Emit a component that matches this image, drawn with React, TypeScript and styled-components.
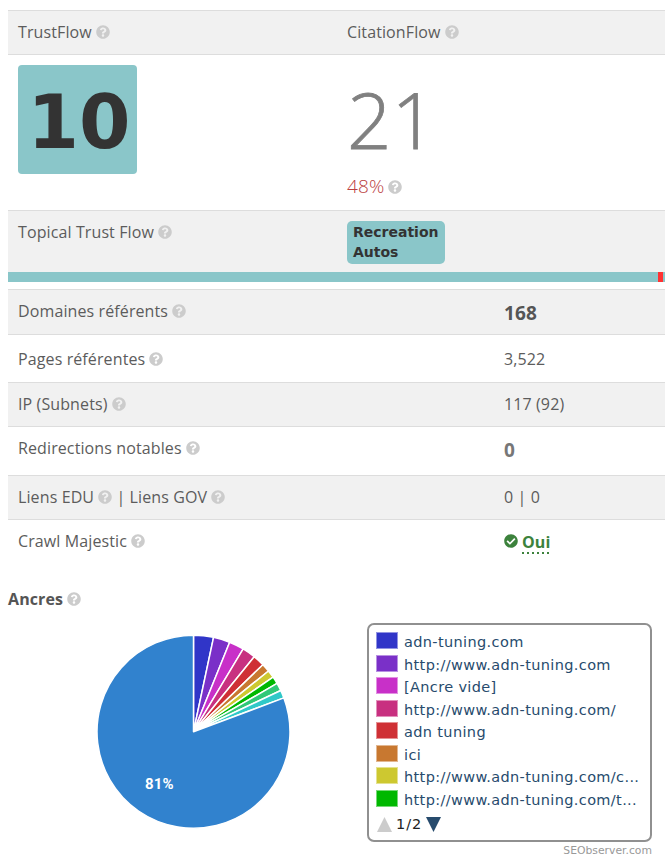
import React from 'react';
import styled, { createGlobalStyle } from 'styled-components';
import { FaQuestionCircle, FaCheckCircle } from 'react-icons/fa';

const GlobalStyle = createGlobalStyle`
  html, body { margin: 0; padding: 0; background: #fff; }
  body { font-family: "Open Sans", sans-serif; font-size: 16px; letter-spacing: 0.11px; color: #5c5c5c; }
`;

const Page = styled.div`
  width: 668px;
  height: 862px;
  overflow: hidden;
  padding: 10px 3px 0 8px;
  box-sizing: border-box;
`;

const HeadRow = styled.div`
  display: grid;
  grid-template-columns: 329px 1fr;
  height: 43px;
  background: #f1f1f1;
  border-top: 1px solid #ddd;
  border-bottom: 1px solid #ddd;
  line-height: 43px;
`;

const Cell = styled.div`
  padding-left: 10px;
`;

const Help = styled(FaQuestionCircle)`
  color: #ccc;
  font-size: 14px;
  margin-left: 4px;
  vertical-align: -1px;
`;

const ScoreRow = styled.div`
  display: grid;
  grid-template-columns: 329px 1fr;
  height: 155px;
`;

const ScoreCell = styled.div`
  padding: 10px 0 0 10px;
`;

const TrustBadge = styled.div`
  width: 119px;
  height: 109px;
  padding-left: 3px;
  box-sizing: border-box;
  border-radius: 4px;
  background: #8ac6c9;
  color: #333;
  font: bold 74px/115px "DejaVu Sans", sans-serif;
  letter-spacing: 0;
  text-align: center;
`;

const Citation = styled.div`
  font-size: 78px;
  font-weight: 300;
  -webkit-text-stroke: 0.8px #808080;
  letter-spacing: 0;
  line-height: 109px;
  color: #808080;
`;

const Ratio = styled.div`
  font-size: 19px;
  font-weight: 300;
  line-height: 24px;
  color: #bb3f3f;
`;

const TopicalRow = styled.div`
  display: grid;
  grid-template-columns: 329px 1fr;
  height: 62px;
  box-sizing: border-box;
  background: #f1f1f1;
  border-top: 1px solid #ddd;
`;

const TopicalLabel = styled(Cell)`
  line-height: 42px;
`;

const Tag = styled.div`
  width: 98px;
  height: 43px;
  margin: 10px 0 0 10px;
  padding: 1px 0 0 6px;
  box-sizing: border-box;
  border-radius: 5px;
  background: #8ac6c9;
  color: #333;
  font: bold 14px/20px "DejaVu Sans", sans-serif;
  letter-spacing: 0;
`;

const FlowBar = styled.div`
  display: flex;
  height: 10px;
  background: #8ac6c9;
  margin-bottom: 7px;
`;

const BarGap = styled.div`
  flex: 1;
`;

const BarRed = styled.div`
  width: 5px;
  background: #ff3333;
  margin-right: 2px;
`;

const StatRow = styled.div<{ $shade?: boolean; $h: number; $line?: number }>`
  display: grid;
  grid-template-columns: 486px 1fr;
  height: ${p => p.$h}px;
  box-sizing: border-box;
  border-top: 1px solid #ddd;
  background: ${p => (p.$shade ? '#f1f1f1' : '#fff')};
  line-height: ${p => p.$line ?? 42}px;
`;

const StatLabel = styled(Cell)``;

const StatValue = styled.div<{ $big?: boolean; $faint?: boolean }>`
  padding-left: 10px;
  font-size: ${p => (p.$big ? 19 : 16)}px;
  font-weight: ${p => (p.$big ? 700 : 400)};
  line-height: ${p => (p.$big ? '47px' : 'inherit')};
  color: ${p => (p.$faint ? '#777' : p.$big ? '#555' : 'inherit')};
`;

const Yes = styled.span`
  color: #3c823c;
  font-weight: 700;
  display: inline-flex;
  align-items: center;
  gap: 4px;
  height: 42px;
`;

const YesWord = styled.span`
  line-height: 20px;
  margin-top: 4px;
  padding-bottom: 2px;
  background: repeating-linear-gradient(90deg, #3c823c 0 2px, transparent 2px 5px) left bottom / 100% 2px no-repeat;
`;

const Section = styled.h3`
  margin: 0;
  padding-top: 1px;
  font-size: 16px;
  line-height: 22px;
  font-weight: 700;
  color: #555;
`;

const ChartArea = styled.div`
  display: flex;
  margin-top: 13px;
`;

const Pie = styled.svg`
  display: block;
  width: 359px;
  height: 218px;
  flex: none;
`;

const PieLabel = styled.text`
  font: bold 15px Roboto, sans-serif;
  fill: #fff;
`;

const Legend = styled.div`
  width: 285px;
  height: 219px;
  box-sizing: border-box;
  border: 2px solid #909090;
  border-radius: 7px;
  padding: 6px 0 0 8px;
  font: 14.5px/22.5px "DejaVu Sans", sans-serif;
  letter-spacing: 0.36px;
  color: #274b6d;
`;

const LegendItem = styled.div`
  display: flex;
  align-items: center;
  gap: 7px;
  height: 22.5px;
  white-space: nowrap;
`;

const Swatch = styled.span<{ $c: string }>`
  flex: none;
  width: 20px;
  height: 15px;
  margin-bottom: 3px;
  background: ${p => p.$c};
  box-shadow: 0 0 0 1px ${p => p.$c}88;
`;

const Pager = styled.div`
  display: flex;
  align-items: center;
  gap: 4px;
  height: 24px;
  margin-top: 1px;
  letter-spacing: 1px;
  color: #222;
`;

const Credit = styled.div`
  font: 10.8px/14px "DejaVu Sans", sans-serif;
  letter-spacing: 0;
  color: #999;
  text-align: right;
  padding: 2px 13px 0 0;
`;

const slices: [number, number, string][] = [
  [0, 12, '#3035c8'],
  [12, 22, '#7a30c8'],
  [22, 31, '#c830c8'],
  [31, 39, '#c83080'],
  [39, 46, '#cf3035'],
  [46, 51, '#c87830'],
  [51, 55.6, '#cdc830'],
  [55.6, 60, '#00b800'],
  [60, 64.7, '#30c878'],
  [64.7, 69.5, '#30c8c8'],
  [69.5, 360, '#3182ce'],
];

const legend: [string, string][] = [
  ['adn-tuning.com', '#3035c8'],
  ['http://www.adn-tuning.com', '#7a30c8'],
  ['[Ancre vide]', '#c830c8'],
  ['http://www.adn-tuning.com/', '#c83080'],
  ['adn tuning', '#cf3035'],
  ['ici', '#c87830'],
  ['http://www.adn-tuning.com/c...', '#cdc830'],
  ['http://www.adn-tuning.com/t...', '#00b800'],
];

// wedge of the anchors pie, angles in degrees clockwise from the top
function wedge(a: number, b: number) {
  const cx = 185.5, cy = 108.7, r = 96.5;
  const pt = (d: number) => {
    const t = (d * Math.PI) / 180;
    return `${(cx + r * Math.sin(t)).toFixed(2)} ${(cy - r * Math.cos(t)).toFixed(2)}`;
  };
  return `M${cx} ${cy}L${pt(a)}A${r} ${r} 0 ${b - a > 180 ? 1 : 0} 1 ${pt(b)}Z`;
}

export default function App() {
  return (
    <Page>
      <GlobalStyle />
      <HeadRow>
        <Cell>TrustFlow<Help /></Cell>
        <Cell>CitationFlow<Help /></Cell>
      </HeadRow>
      <ScoreRow>
        <ScoreCell><TrustBadge>10</TrustBadge></ScoreCell>
        <ScoreCell>
          <Citation>21</Citation>
          <Ratio>48%<Help /></Ratio>
        </ScoreCell>
      </ScoreRow>
      <TopicalRow>
        <TopicalLabel>Topical Trust Flow<Help /></TopicalLabel>
        <Tag>Recreation<br />Autos</Tag>
      </TopicalRow>
      <FlowBar>
        <BarGap />
        <BarRed />
      </FlowBar>
      <StatRow $shade $h={45}>
        <StatLabel>Domaines référents<Help /></StatLabel>
        <StatValue $big>168</StatValue>
      </StatRow>
      <StatRow $h={48} $line={48}>
        <StatLabel>Pages référentes<Help /></StatLabel>
        <StatValue>3,522</StatValue>
      </StatRow>
      <StatRow $shade $h={44}>
        <StatLabel>IP (Subnets)<Help /></StatLabel>
        <StatValue>117 (92)</StatValue>
      </StatRow>
      <StatRow $h={49}>
        <StatLabel>Redirections notables<Help /></StatLabel>
        <StatValue $big $faint>0</StatValue>
      </StatRow>
      <StatRow $shade $h={44}>
        <StatLabel>Liens EDU<Help /> | Liens GOV<Help /></StatLabel>
        <StatValue>0 | 0</StatValue>
      </StatRow>
      <StatRow $h={68}>
        <StatLabel>Crawl Majestic<Help /></StatLabel>
        <StatValue>
          <Yes><FaCheckCircle size={14} /><YesWord>Oui</YesWord></Yes>
        </StatValue>
      </StatRow>
      <Section>Ancres<Help /></Section>
      <ChartArea>
        <Pie viewBox="0 0 359 218">
          {slices.map(([a, b, c]) => (
            <path key={a} d={wedge(a, b)} fill={c} stroke="#fff" strokeWidth={1.5} strokeLinejoin="round" />
          ))}
          <PieLabel x={137} y={166}>81%</PieLabel>
        </Pie>
        <Legend>
          {legend.map(([t, c]) => (
            <LegendItem key={t}><Swatch $c={c} />{t}</LegendItem>
          ))}
          <Pager>
            <svg width="15" height="15" viewBox="0 0 15 15"><path d="M0 15L7.5 0L15 15Z" fill="#ccc" /></svg>
            1/2
            <svg width="15" height="15" viewBox="0 0 15 15"><path d="M0 0L15 0L7.5 15Z" fill="#274b6d" /></svg>
          </Pager>
        </Legend>
      </ChartArea>
      <Credit>SEObserver.com</Credit>
    </Page>
  );
}
